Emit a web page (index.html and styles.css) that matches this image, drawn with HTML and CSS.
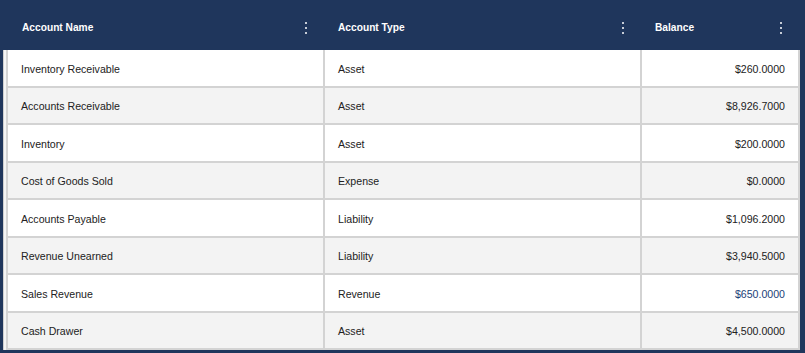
FILE: index.html
```html
<!DOCTYPE html>
<html>
<head>
<meta charset="utf-8">
<link rel="stylesheet" href="styles.css">
</head>
<body>
<div class="panel">
  <div class="head">
    <div class="hcell first"><span>Account Name</span><i class="kebab"></i></div>
    <div class="hcell"><span>Account Type</span><i class="kebab"></i></div>
    <div class="hcell"><span>Balance</span><i class="kebab"></i></div>
  </div>
  <div class="body">
    <div class="row"><div class="cell">Inventory Receivable</div><div class="cell">Asset</div><div class="cell num">$260.0000</div></div>
    <div class="row alt"><div class="cell">Accounts Receivable</div><div class="cell">Asset</div><div class="cell num">$8,926.7000</div></div>
    <div class="row"><div class="cell">Inventory</div><div class="cell">Asset</div><div class="cell num">$200.0000</div></div>
    <div class="row alt"><div class="cell">Cost of Goods Sold</div><div class="cell">Expense</div><div class="cell num">$0.0000</div></div>
    <div class="row"><div class="cell">Accounts Payable</div><div class="cell">Liability</div><div class="cell num">$1,096.2000</div></div>
    <div class="row alt"><div class="cell">Revenue Unearned</div><div class="cell">Liability</div><div class="cell num">$3,940.5000</div></div>
    <div class="row"><div class="cell">Sales Revenue</div><div class="cell">Revenue</div><div class="cell num blue">$650.0000</div></div>
    <div class="row alt"><div class="cell">Cash Drawer</div><div class="cell">Asset</div><div class="cell num">$4,500.0000</div></div>
  </div>
</div>
</body>
</html>
```
FILE: styles.css
```css
html, body {
  margin: 0;
  padding: 0;
  background: #1f365c;
}
.panel {
  width: 805px;
  height: 353px;
  box-sizing: border-box;
  padding: 0 5px 0 3px;
  background: #1f365c;
  font-family: "Liberation Sans", Arial, sans-serif;
}
.head {
  height: 50px;
  box-sizing: border-box;
  padding-top: 5px;
  display: grid;
  grid-template-columns: 317px 317px 158px;
  padding-left: 5px;
}
.hcell {
  display: flex;
  align-items: center;
  justify-content: space-between;
  padding: 0 18px 0 13px;
  color: #ffffff;
  font-weight: bold;
  font-size: 10.2px;
}
.hcell.first {
  padding-left: 14px;
}
.kebab {
  width: 2px;
  height: 2px;
  border-radius: 1px;
  background: #ffffff;
  box-shadow: 0 -5px 0 #ffffff, 0 5px 0 #ffffff;
}
.body {
  border-left: 1px solid #cfcfcf;
  background: #f4f4f4;
  padding-left: 2px;
}
.row {
  display: grid;
  grid-template-columns: 317px 317px 158px;
  height: 37.5px;
  box-sizing: border-box;
  border-left: 2px solid #d3d3d3;
  border-bottom: 2px solid #d3d3d3;
  background: #ffffff;
}
.row.alt {
  background: #f3f3f3;
}
.cell {
  display: flex;
  align-items: center;
  padding: 2px 13px 0;
  border-right: 2px solid #d3d3d3;
  font-size: 10.6px;
  color: #222222;
}
.cell.num {
  justify-content: flex-end;
}
.cell.blue {
  color: #1c3f78;
}
```
